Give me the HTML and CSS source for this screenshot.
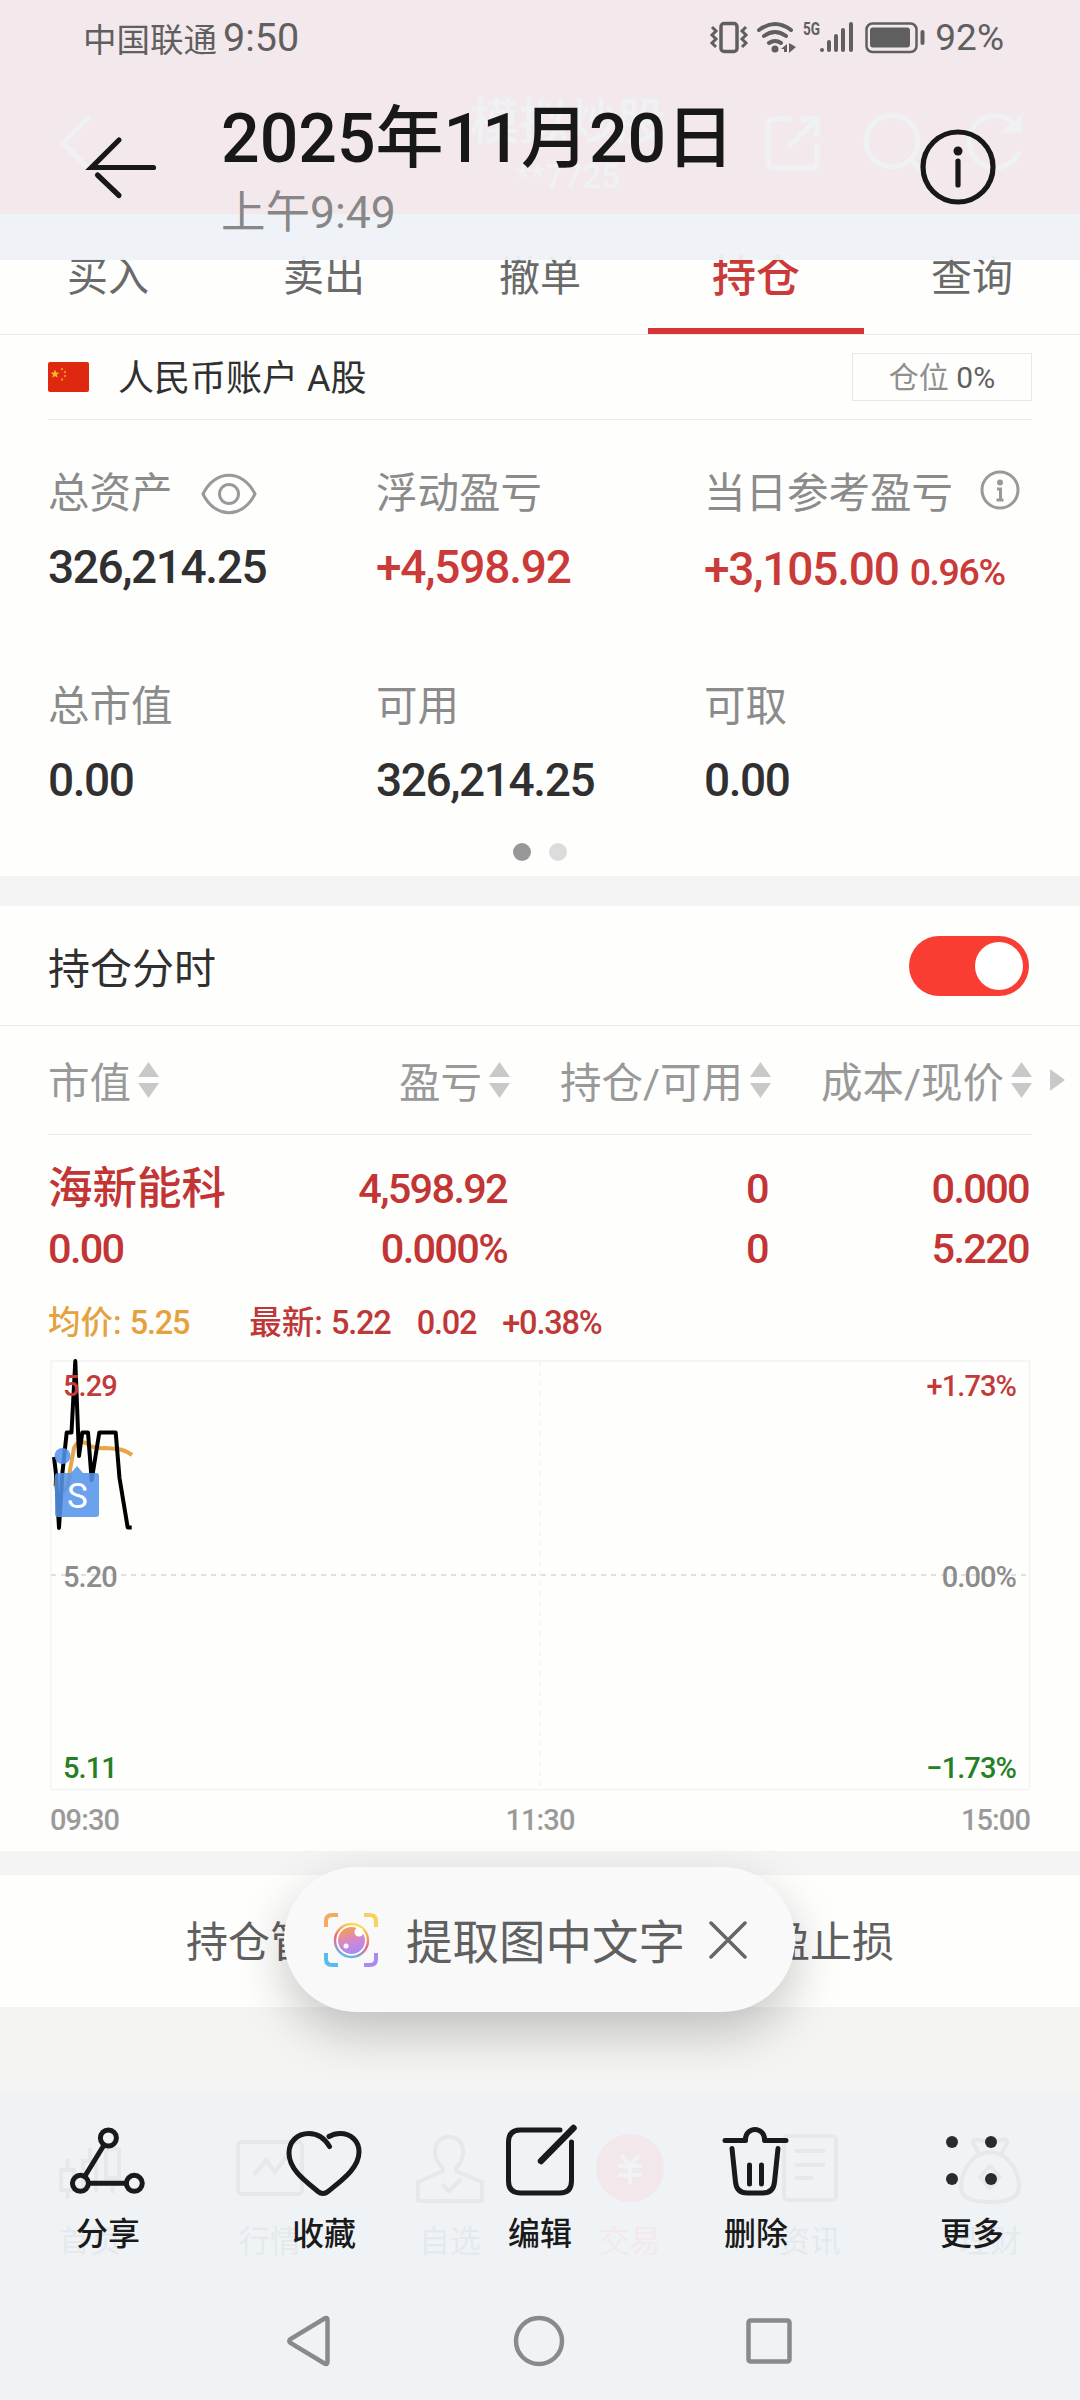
FILE: index.html
```html
<!DOCTYPE html>
<html lang="zh-CN">
<head>
<meta charset="utf-8">
<title>2025年11月20日</title>
<link rel="stylesheet" href="styles.css">
</head>
<body>
<div class="screen">

  <div class="app">
    <div class="app-head">
      <svg class="app-back" width="40" height="64" viewBox="0 0 40 64"><path d="M34 6 8 32l26 26"/></svg>
      <div class="app-title"><div class="app-name">模拟炒股</div><div class="app-no">**7725</div></div>
      <svg class="app-tools" width="280" height="80" viewBox="755 103 280 80">
        <path d="M791 119h-16q-7 0-7 7v35q0 7 7 7h35q7 0 7-7v-17M801 119h16v18M816 120l-28 27"/>
        <circle cx="892" cy="141" r="26"/><path d="m911 160 18 18"/>
        <path d="M1019 152a26 26 0 1 1-4-27M1019 120v10h-11z"/>
      </svg>
    </div>

    <nav class="tabs">
      <span class="tab">买入</span><span class="tab">卖出</span><span class="tab">撤单</span><span class="tab tab-on">持仓</span><span class="tab">查询</span>
    </nav>

    <div class="account">
      <svg class="flag" width="41" height="30" viewBox="0 0 41 30">
        <rect width="41" height="30" rx="2" fill="#de2810"/>
        <path d="m7 7.500 1.200 3 3 .2-2.300 2 .8 3L7 14l-2.700 1.700.8-3-2.300-2 3-.2z" fill="#ffb52a"/>
        <g fill="#f08a20"><circle cx="14" cy="7" r="1.200"/><circle cx="17" cy="10" r="1.200"/><circle cx="17" cy="14" r="1.200"/><circle cx="14" cy="17.500" r="1.200"/></g>
      </svg>
      <span class="account-name">人民币账户 A股</span>
      <span class="position">仓位 <b>0%</b></span>
    </div>

    <section class="stats">
      <div class="stat">
        <div class="stat-label">总资产
          <svg class="eye" width="56" height="42" viewBox="0 0 56 42"><path d="M2 21C14-4 42-4 54 21 42 46 14 46 2 21z"/><circle cx="28" cy="21" r="9.500"/></svg>
        </div>
        <div class="stat-value">326,214.25</div>
      </div>
      <div class="stat"><div class="stat-label">浮动盈亏</div><div class="stat-value up">+4,598.92</div></div>
      <div class="stat">
        <div class="stat-label">当日参考盈亏
          <svg class="tip" width="40" height="40" viewBox="0 0 40 40"><circle cx="20" cy="20" r="18"/><circle cx="20" cy="12.500" r="1.500"/><path d="M17 19h3.500v11M16.500 30h7"/></svg>
        </div>
        <div class="stat-value up today">+3,105.00<small>0.96%</small></div>
      </div>
      <div class="stat"><div class="stat-label">总市值</div><div class="stat-value">0.00</div></div>
      <div class="stat"><div class="stat-label">可用</div><div class="stat-value">326,214.25</div></div>
      <div class="stat"><div class="stat-label">可取</div><div class="stat-value">0.00</div></div>
    </section>
    <div class="pager"><i class="on"></i><i></i></div>

    <div class="split"></div>

    <div class="switch-row"><span>持仓分时</span><span class="switch"><i></i></span></div>

    <div class="cols head">
      <span>市值<svg class="sort" viewBox="0 0 21 36"><path d="M10.500 0 21 15H0zM0 21h21L10.500 36z"/></svg></span>
      <span>盈亏<svg class="sort" viewBox="0 0 21 36"><path d="M10.500 0 21 15H0zM0 21h21L10.500 36z"/></svg></span>
      <span>持仓/可用<svg class="sort" viewBox="0 0 21 36"><path d="M10.500 0 21 15H0zM0 21h21L10.500 36z"/></svg></span>
      <span>成本/现价<svg class="sort" viewBox="0 0 21 36"><path d="M10.500 0 21 15H0zM0 21h21L10.500 36z"/></svg></span>
      <svg class="more-cols" viewBox="0 0 15 22"><path d="M0 0 15 11 0 22z"/></svg>
    </div>
    <div class="cols holding first"><span class="stock">海新能科</span><span>4,598.92</span><span>0</span><span>0.000</span></div>
    <div class="cols holding"><span>0.00</span><span>0.000%</span><span>0</span><span>5.220</span></div>

    <div class="quote"><span class="avg">均价: <b>5.25</b></span><span>最新: <b>5.22</b></span><b>0.02</b><b>+0.38%</b></div>

    <svg class="chart" width="1080" height="501" viewBox="0 1350 1080 501">
      <rect x="51" y="1361" width="978.500" height="428.500" class="frame"/>
      <path d="M51 1575H1029" class="mid"/>
      <path d="M540 1361V1789" class="noon"/>
      <path class="average" d="M55 1486Q58 1467 60 1487L63 1491Q69 1488 70 1470L74 1448Q77 1440 86 1443Q93 1449 105 1448L118 1449Q125 1450 132 1455"/>
      <path class="price" d="M54 1457 56 1474 59 1528 62.500 1472 66.700 1432.500H71.500L75.300 1361 79 1456 82.300 1432.500H88L91.700 1480 99.300 1432.500H115.700L119.500 1478 127.700 1527.500H131.700"/>
      <g class="axis">
        <text x="63" y="1396" class="t-up">5.29</text><text x="1016" y="1396" class="t-up end">+1.73%</text>
        <text x="63" y="1587">5.20</text><text x="1016" y="1587" class="end">0.00%</text>
        <text x="63" y="1778" class="t-down">5.11</text><text x="1016" y="1778" class="t-down end">−1.73%</text>
        <text x="50" y="1830" class="time">09:30</text><text x="540" y="1830" class="time center">11:30</text><text x="1030" y="1830" class="time end">15:00</text>
      </g>
      <g class="sell"><circle cx="62.500" cy="1456" r="8"/><path d="M58 1473h13l6-7 6 7h13q3 0 3 3v38q0 3-3 3H58q-3 0-3-3v-38q0-3 3-3z"/></g>
      <text x="77.500" y="1508" class="sell-text">S</text>
    </svg>

    <div class="split thin"></div>
    <div class="actions"><span>持仓管理</span><span>止盈止损</span></div>
    <div class="rest"></div>

    <nav class="app-nav">
      <div><svg width="72" height="72" viewBox="0 0 72 72"><path d="M13.500 27v10M13.500 59v8M7 38h13v20H7zM36 16v12M29 60V29h13v31M52 17h13v29H52zM58.500 46v15"/></svg>首页</div>
      <div><svg width="72" height="72" viewBox="0 0 72 72"><rect x="4" y="10" width="64" height="52" rx="4"/><path d="m20 43 12-15 9 12 13-17"/></svg>行情</div>
      <div><svg width="72" height="72" viewBox="0 0 72 72"><path d="M29 36c-12-10-11-31 6-31s18 21 7 31v3l26 11v18q0 1-2 1H6q-2 0-2-1V50l25-11zM28 52l7 7 12-12"/></svg>自选</div>
      <div class="trade"><svg width="72" height="72" viewBox="0 0 72 72"><circle cx="36" cy="36" r="34"/><path d="m27 23 9 11 9-11M24 34h24M24 43h24M36 34v18"/></svg>交易</div>
      <div><svg width="72" height="72" viewBox="0 0 72 72"><rect x="10" y="4" width="52" height="64" rx="4"/><path d="M21 19h30M21 33h30M21 46h18"/></svg>资讯</div>
      <div><svg width="72" height="72" viewBox="0 0 72 72"><path d="m25 22-6-11q0-5 6-3l5 1q6-2 12 0l5-1q7-2 6 3l-6 11M36 20c-18 0-29 20-29 35q0 15 29 15t29-15c0-15-11-35-29-35zM36 34 26 45l10 11 10-11z"/></svg>理财</div>
    </nav>
  </div>

  <header class="top">
    <div class="status">
      <span class="carrier">中国联通</span><span class="clock">9:50</span>
      <svg class="status-icons" width="220" height="40" viewBox="710 16 220 40">
        <g fill="none" stroke="#5f5f5f">
          <rect x="723" y="22.500" width="16" height="28" rx="3" stroke-width="3.500"/>
          <path stroke-width="3" d="m714 26 4 4-4 4 4 4-4 4 4 4M748 26l-4 4 4 4-4 4 4 4-4 4"/>
          <path stroke-width="4" stroke-linecap="round" d="M761 29q16-12 32 0M766 35q11-8 22 0M771 42q6-4 12 0"/>
          <path stroke-width="4" stroke-linecap="round" d="M824 49v0M831 41v8M838 35v14M845 29v20M853 23v26"/>
          <rect x="868.500" y="22.500" width="50" height="28.500" rx="6" stroke-width="2.500"/>
          <path stroke-width="4" stroke-linecap="round" d="M924.500 31v11"/>
        </g>
        <g fill="#5f5f5f"><circle cx="777" cy="48" r="3.500"/><path d="m789 43-6 5h3v3h3zM791 42v10l7-6z"/><rect x="872" y="26.500" width="40" height="20" rx="3"/></g>
        <text x="805" y="34" font-size="18" font-weight="700" textLength="17" lengthAdjust="spacingAndGlyphs" fill="#5f5f5f">5G</text>
      </svg>
      <span class="battery">92%</span>
    </div>
    <div class="title-row">
      <svg class="back" width="76" height="72" viewBox="84 130 76 72"><path d="M153.500 166.500H91.500L119 139M97.500 174 119 194.500"/></svg>
      <div class="when"><div class="date">2025年11月20日</div><div class="hour">上午9:49</div></div>
      <svg class="info" width="76" height="76" viewBox="0 0 76 76"><circle cx="38" cy="38" r="35"/><path d="M38 32v24"/><circle cx="38" cy="22" r="4.500" class="dot"/></svg>
    </div>
  </header>

  <div class="pill">
    <svg width="56" height="56" viewBox="0 0 56 56">
      <defs>
        <linearGradient id="ring" x1=".6" y1="0" x2=".3" y2="1"><stop offset="0" stop-color="#f9e04a"/><stop offset=".5" stop-color="#f2667c"/><stop offset="1" stop-color="#58bdf2"/></linearGradient>
        <linearGradient id="lens" x1=".3" y1="0" x2=".6" y2="1"><stop offset="0" stop-color="#f7a04a"/><stop offset=".5" stop-color="#d987c8"/><stop offset="1" stop-color="#a88bf5"/></linearGradient>
      </defs>
      <g fill="none" stroke-width="4">
        <path d="M3 15V9q0-6 6-6h6" stroke="#f3ab5e"/><path d="M41 3h6q6 0 6 6v6" stroke="#f6d25c"/>
        <path d="M3 41v6q0 6 6 6h6" stroke="#56bcee"/><path d="M41 53h6q6 0 6-6v-6" stroke="#a98af0"/>
      </g>
      <circle cx="28.500" cy="28.500" r="16.500" fill="#fff" stroke="url(#ring)" stroke-width="2.500"/>
      <circle cx="28.500" cy="28.500" r="13.500" fill="url(#lens)"/><circle cx="36" cy="20" r="4.500" fill="#fff"/><circle cx="23" cy="34" r="2.500" fill="#fff"/>
    </svg>
    <span>提取图中文字</span>
    <svg class="close" width="38" height="38" viewBox="0 0 38 38"><path d="m2 2 34 34M36 2 21 17M17 21 2 36"/></svg>
  </div>

  <footer class="bottom">
    <div class="tools">
      <div><svg width="80" height="80" viewBox="0 0 80 80"><circle cx="40.400" cy="16" r="8"/><circle cx="12.400" cy="61.300" r="8"/><circle cx="66.300" cy="61.300" r="8"/><path d="m36 23-19 31M20.500 61.300h38"/></svg>分享</div>
      <div><svg width="80" height="80" viewBox="0 0 80 80"><path d="M45.500 24.500C41 17 34 11.500 25 11.500 13 11.500 5 20 5 31c0 16 15 27 29 38.500q5 4 10 0C58 58 75 46 75 30 75 19 67 11.500 56 11.500q-6 0-11 3"/></svg>收藏</div>
      <div><svg width="80" height="80" viewBox="0 0 80 80"><path d="M60 8H20.500Q8.500 8 8.500 20v39q0 12 12 12h39q12 0 12-12V20"/><path class="pen" d="M41 39 73.500 6"/></svg>编辑</div>
      <div><svg width="80" height="80" viewBox="0 0 80 80"><path d="M9 18.500h20.500V17a9.500 9.500 0 0 1 19 0v1.500H70M16 26.500 19.500 60q1 11 12 11h15q11 0 12-11L62 26.500" /><path d="M33.500 43v19M45.500 43v19"/></svg>删除</div>
      <div><svg class="dots" width="80" height="80" viewBox="0 0 80 80"><circle cx="20" cy="20" r="6"/><circle cx="59" cy="20" r="6"/><circle cx="20" cy="57" r="6"/><circle cx="59" cy="57" r="6"/></svg>更多</div>
    </div>
    <div class="system">
      <svg width="50" height="54" viewBox="284 2314 50 54"><path d="M327.500 2320v42q0 3-3 1.500l-34-20.500q-2.500-2 0-4l34-20.500q3-1.500 3 1.500z"/></svg>
      <svg width="54" height="54" viewBox="0 0 54 54"><circle cx="27" cy="27" r="23"/></svg>
      <svg width="50" height="54" viewBox="0 0 50 54"><rect x="4.500" y="6.500" width="41" height="41" rx="2"/></svg>
    </div>
  </footer>
</div>
</body>
</html>
```

FILE: styles.css
```css
* { box-sizing: border-box; }

body {
  margin: 0;
  font-family: Roboto, "Noto Sans CJK SC", sans-serif;
}

svg { display: block; flex: none; }

.screen {
  position: relative;
  width: 1080px;
  height: 2400px;
  overflow: hidden;
  background: #eff3f6;
}

.app {
  display: flex;
  flex-direction: column;
  background: #fefefd;
}

/* App header seen through the viewer bar */
.app-head {
  display: flex;
  align-items: center;
  height: 214px;
  padding: 72px 45px 0 55px;
  background: #f3e8ec;
  color: #eff2f5;
  fill: none;
  stroke: #eff2f5;
  stroke-width: 5;
}
.app-title {
  width: 240px;
  margin: 12px 0 0 353px;
  text-align: center;
  stroke: none;
}
.app-name { font-size: 49px; font-weight: 500; line-height: 56px; }
.app-no { font-size: 33px; line-height: 52px; font-weight: 500; }
.app-tools { margin-left: auto; }

.tabs {
  display: flex;
  height: 121px;
  border-bottom: 1px solid #ebebeb;
}
.tab {
  flex: 1;
  padding-top: 33px;
  text-align: center;
  font-size: 41px;
  line-height: 60px;
  color: #6a6a6a;
}
.tab-on {
  border-bottom: 6px solid #d83433;
  color: #c93a38;
  font-size: 44px;
  font-weight: 500;
}

.account {
  display: flex;
  align-items: center;
  height: 85px;
  margin: 0 48px;
  border-bottom: 1px solid #ebebeb;
}
.account-name {
  margin-left: 29px;
  font-size: 36px;
  line-height: 48px;
  padding-top: 4px;
  color: #303030;
}
.position {
  width: 180px;
  height: 48px;
  margin-left: auto;
  border: 1px solid #e8e8e8;
  text-align: center;
  font-size: 30px;
  line-height: 48px;
  color: #8f8f8f;
}
.position b { font-weight: 400; color: #606060; }

.stats {
  display: grid;
  grid-template-columns: repeat(3, 328px);
  grid-template-rows: 213px 170px;
  padding: 40px 48px 0;
}
.stat-label {
  display: flex;
  align-items: center;
  height: 60px;
  white-space: nowrap;
  font-size: 41.500px;
  color: #8b8b8b;
}
.stat-label svg { fill: none; stroke: #999; stroke-width: 3; }
.eye { margin: 8px 0 0 28px; }
.tip { margin-left: 27px; }
.stat-value {
  padding-top: 17px;
  font-size: 46px;
  font-weight: 500;
  line-height: 60px;
  letter-spacing: -1.400px;
  white-space: nowrap;
  color: #303030;
}
.stat-value.up { color: #c93a38; letter-spacing: -1.200px; }
.stat-value.today { padding-top: 19px; }
.stat-value small { margin-left: 11px; font-size: 37.500px; letter-spacing: -1.400px; }

.pager {
  display: flex;
  justify-content: center;
  gap: 18px;
  height: 33px;
}
.pager i { width: 18px; height: 18px; border-radius: 50%; background: #dcdcdc; }
.pager .on { background: #989898; }

.split { height: 30px; background: #f4f4f4; }
.split.thin { height: 24px; }

.switch-row {
  display: flex;
  align-items: center;
  justify-content: space-between;
  height: 120px;
  padding: 0 51px 0 48px;
  border-bottom: 1px solid #ebebeb;
  font-size: 42px;
  color: #303030;
}
.switch {
  display: flex;
  justify-content: flex-end;
  width: 120px;
  height: 60px;
  padding: 6px;
  border-radius: 30px;
  background: #f93d33;
}
.switch i { width: 48px; height: 48px; border-radius: 50%; background: #fff; }

.cols {
  display: grid;
  grid-template-columns: 200px 262px 261px 261px;
  align-items: center;
  margin: 0 48px;
}
.cols span { text-align: right; }
.cols span:first-child { text-align: left; }
.head {
  position: relative;
  height: 109px;
  border-bottom: 1px solid #ebebeb;
  font-size: 41.500px;
  color: #999;
}
.head span {
  display: flex;
  align-items: center;
  justify-content: flex-end;
  gap: 7px;
}
.head span:first-child { justify-content: flex-start; }
.sort { width: 21px; height: 36px; fill: #c9c9c9; }
.more-cols { position: absolute; right: -33px; top: 43px; width: 15px; height: 22px; fill: #c9c9c9; }

.holding {
  height: 60px;
  font-size: 41.500px;
  font-weight: 500;
  line-height: 60px;
  letter-spacing: -1.700px;
  color: #c23534;
}
.holding span { padding-right: 3px; }
.first { margin-top: 24px; }
.holding .stock { font-size: 44.500px; letter-spacing: 0; }

.quote {
  display: flex;
  gap: 26px;
  height: 71px;
  padding: 14px 48px 0;
  font-size: 32.500px;
  font-weight: 500;
  line-height: 60px;
  color: #bd3836;
}
.quote b { font-weight: 500; letter-spacing: -1.200px; }
.quote .avg { margin-right: 34px; color: #e3a23e; }

.frame { fill: none; stroke: #f3f3f3; stroke-width: 1.500; }
.mid { stroke: #e0e0e0; stroke-width: 2; stroke-dasharray: 5; }
.noon { stroke: #f2f2f2; stroke-width: 1.500; stroke-dasharray: 5; }
.price, .average { fill: none; stroke: #000; stroke-width: 4; stroke-linejoin: round; }
.average { stroke: #e5a548; }
.axis { font-size: 29px; font-weight: 500; letter-spacing: -.9px; fill: #8c8c8c; }
.t-up { fill: #c23b3a; }
.t-down { fill: #258025; }
.time { fill: #9a9a9a; }
.end { text-anchor: end; }
.center { text-anchor: middle; }
.sell { fill: #5494eb; fill-opacity: .87; }
.sell-text { font-size: 35px; fill: #fff; text-anchor: middle; }

.actions {
  display: flex;
  height: 132px;
  font-size: 42px;
  line-height: 136px;
  color: #606060;
}
.actions span { flex: 1; text-align: center; }
.rest { height: 86px; background: #f4f4f3; }

/* App tab bar, faint behind the viewer toolbar */
.app-nav {
  display: flex;
  height: 307px;
  padding-top: 39px;
  background: #eff3f6;
  color: #e5e9ec;
  font-size: 31px;
  line-height: 76px;
}
.app-nav div { display: flex; flex: 1; flex-direction: column; align-items: center; }
.app-nav svg { fill: none; stroke: #e5e9ec; stroke-width: 4; }
.app-nav .trade { color: #f4e8eb; }
.trade circle { fill: #f2e7ea; stroke: none; }
.trade path { stroke: #eff3f6; }

.top {
  position: absolute;
  inset: 0 0 auto;
  height: 260px;
  background: linear-gradient(transparent 214px, rgba(238, 242, 246, .95) 214px);
}
.status {
  display: flex;
  align-items: center;
  height: 74px;
  padding: 0 76px 0 83px;
  color: #5f5f5f;
}
.carrier { font-size: 33.500px; }
.clock { margin-left: 6px; font-size: 39.500px; }
.status-icons { margin-left: auto; }
.battery { margin-left: 7px; font-size: 37px; }
.title-row {
  display: flex;
  align-items: center;
  height: 186px;
  padding: 0 84px;
}
.back, .info { fill: none; stroke: #181818; stroke-width: 5.200; stroke-linecap: round; }
.info { margin-left: auto; }
.info .dot { fill: #181818; stroke: none; }
.when { margin: 8px 0 0 61px; white-space: nowrap; }
.date { font-size: 68px; font-weight: 500; line-height: 84px; color: #181818; }
.hour { font-size: 44.500px; line-height: 64px; color: #878787; }

.pill {
  position: absolute;
  left: 284px;
  top: 1867px;
  display: flex;
  align-items: center;
  width: 511px;
  height: 145px;
  padding-left: 39px;
  border-radius: 73px;
  background: #f9f9fa;
  box-shadow: 0 20px 50px rgba(0, 0, 0, .22);
  font-size: 46.500px;
  line-height: 60px;
  color: #606060;
}
.pill span { margin: 6px 24px 0 27px; }
.close { stroke: #666; stroke-width: 3.500; stroke-linecap: round; }

.bottom { position: absolute; inset: 2093px 0 0; }
.tools { display: flex; padding-top: 29px; }
.tools div {
  display: flex;
  flex: 1;
  flex-direction: column;
  align-items: center;
  font-size: 32px;
  line-height: 64px;
  font-weight: 500;
  color: #1a1a1a;
}
.tools svg { fill: none; stroke: #1a1a1a; stroke-width: 5; stroke-linecap: round; stroke-linejoin: round; }
.tools .pen { stroke-width: 6.500; }
.tools .dots { fill: #2b2b2b; stroke: none; }
.system { display: flex; justify-content: space-between; padding: 48px 286px 0 284px; }
.system svg { fill: none; stroke: #8a8a8a; stroke-width: 4.500; }
```
